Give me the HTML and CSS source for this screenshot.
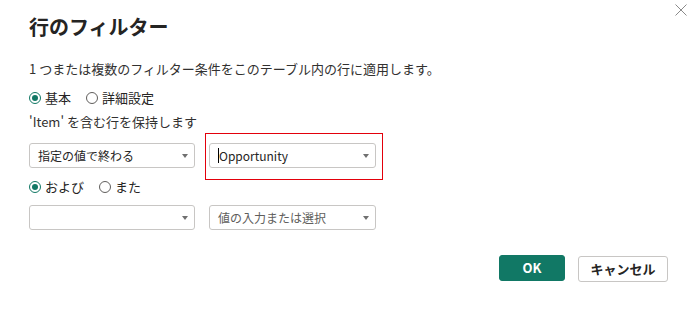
FILE: index.html
```html
<!DOCTYPE html>
<html lang="ja">
<head>
<meta charset="utf-8">
<title>行のフィルター</title>
<link rel="stylesheet" href="styles.css">
</head>
<body>
<div class="dialog">
  <button class="close" aria-label="閉じる">
    <svg width="12" height="12" viewBox="0 0 12 12"><path d="M0.5 0.5 L11.5 11.5 M11.5 0.5 L0.5 11.5" stroke="#8a8a8a" stroke-width="1" fill="none"/></svg>
  </button>
  <h1 class="title">行のフィルター</h1>
  <p class="desc">1 つまたは複数のフィルター条件をこのテーブル内の行に適用します。</p>
  <div class="radios mode">
    <label class="radio"><span class="dot on"></span>基本</label>
    <label class="radio"><span class="dot"></span>詳細設定</label>
  </div>
  <p class="keep">'Item' を含む行を保持します</p>
  <div class="row first">
    <div class="select"><span class="val">指定の値で終わる</span><span class="arrow"></span></div>
    <div class="select focus"><span class="val"><span class="caret"></span>Opportunity</span><span class="arrow"></span></div>
    <div class="highlight"></div>
  </div>
  <div class="radios logic">
    <label class="radio"><span class="dot on"></span>および</label>
    <label class="radio"><span class="dot"></span>また</label>
  </div>
  <div class="row second">
    <div class="select"><span class="val"></span><span class="arrow"></span></div>
    <div class="select"><span class="val placeholder">値の入力または選択</span><span class="arrow"></span></div>
  </div>
  <div class="actions">
    <button class="btn primary">OK</button>
    <button class="btn secondary">キャンセル</button>
  </div>
</div>
</body>
</html>
```
FILE: styles.css
```css
html, body {
  margin: 0;
  padding: 0;
  background: #ffffff;
}
body {
  font-family: "Noto Sans CJK JP", "Noto Sans", sans-serif;
  color: #252423;
  width: 694px;
  height: 311px;
  overflow: hidden;
}
.dialog {
  position: relative;
  padding: 14px 26px 0 29px;
}
.close {
  position: absolute;
  top: 3px;
  right: 6px;
  width: 14px;
  height: 14px;
  padding: 0;
  border: none;
  background: transparent;
  display: flex;
  align-items: center;
  justify-content: center;
}
.title {
  margin: 0;
  font-size: 20px;
  line-height: 25px;
  font-weight: 700;
  color: #252423;
}
.desc {
  margin: 21px 0 0;
  font-size: 13px;
  line-height: 18px;
  color: #323130;
}
.radios {
  display: flex;
  align-items: center;
  height: 18px;
  font-size: 13px;
  line-height: 18px;
}
.mode { margin-top: 11px; }
.logic { margin-top: 10px; }
.radio {
  display: flex;
  align-items: center;
  margin-right: 15px;
  color: #252423;
}
.dot {
  width: 10px;
  height: 10px;
  border: 1px solid #605e5c;
  border-radius: 50%;
  margin-right: 4px;
  box-sizing: content-box;
  position: relative;
}
.dot.on {
  border-color: #117865;
}
.dot.on::after {
  content: "";
  position: absolute;
  left: 2px;
  top: 2px;
  width: 6px;
  height: 6px;
  border-radius: 50%;
  background: #117865;
}
.keep {
  margin: 6px 0 0;
  font-size: 13px;
  line-height: 18px;
  color: #323130;
}
.row {
  position: relative;
  display: flex;
  gap: 14px;
}
.row.first { margin-top: 12px; }
.row.second { margin-top: 9px; }
.select {
  box-sizing: border-box;
  width: 166px;
  height: 25px;
  border: 1px solid #c8c6c4;
  border-radius: 3px;
  display: flex;
  align-items: center;
  justify-content: space-between;
  padding: 0 6px 0 8px;
  font-size: 12px;
  line-height: 16px;
  color: #252423;
}
.select + .select { width: 167px; }
.val {
  display: flex;
  align-items: center;
}
.placeholder { color: #605e5c; }
.caret {
  display: inline-block;
  width: 1px;
  height: 15px;
  background: #000;
  margin-right: 0;
}
.arrow {
  width: 0;
  height: 0;
  border-left: 3.5px solid transparent;
  border-right: 3.5px solid transparent;
  border-top: 4px solid #707070;
}
.highlight {
  position: absolute;
  left: 176px;
  top: -10px;
  width: 178px;
  height: 47px;
  border: 1px solid #e3000b;
  box-sizing: border-box;
  pointer-events: none;
}
.actions {
  display: flex;
  justify-content: flex-end;
  gap: 13px;
  margin-top: 25px;
}
.btn {
  box-sizing: border-box;
  height: 26px;
  border-radius: 3px;
  font-family: "Noto Sans CJK JP", "Noto Sans", sans-serif;
  font-size: 13px;
  font-weight: 700;
  padding: 0;
  line-height: 16px;
}
.primary {
  width: 66px;
  background: #117865;
  border: 1px solid #117865;
  color: #ffffff;
}
.secondary {
  width: 90px;
  margin-top: 1px;
  background: #ffffff;
  border: 1px solid #c8c6c4;
  color: #252423;
}
```
